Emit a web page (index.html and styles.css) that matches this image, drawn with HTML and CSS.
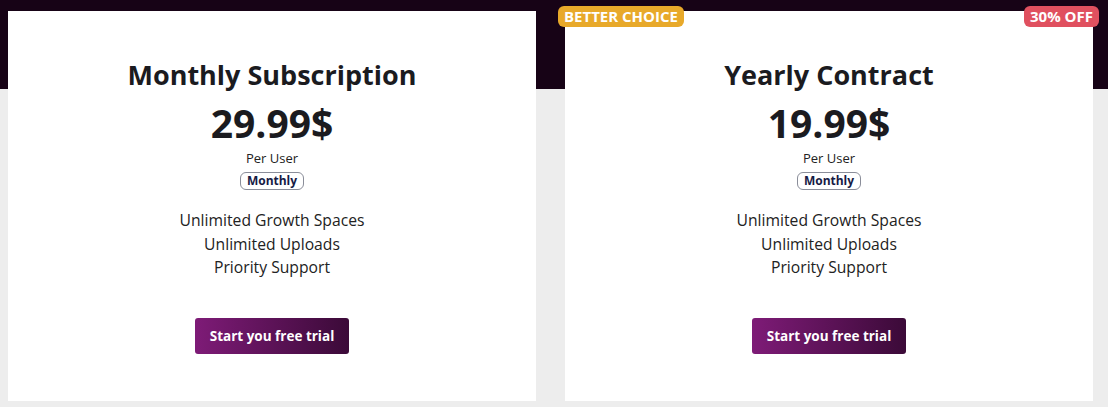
FILE: index.html
```html
<!DOCTYPE html>
<html lang="en">

<head>
  <meta charset="UTF-8">
  <meta name="viewport" content="width=device-width, initial-scale=1.0">
  <title>Pricing</title>
  <link rel="stylesheet" href="styles.css">
</head>

<body>
  <div class="pricing">
    <div class="card">
      <h2>Monthly Subscription</h2>
      <div class="price">29.99$</div>
      <p class="per">Per User</p>
      <span class="period">Monthly</span>
      <ul class="features">
        <li>Unlimited Growth Spaces</li>
        <li>Unlimited Uploads</li>
        <li>Priority Support</li>
      </ul>
      <button>Start you free trial</button>
    </div>

    <div class="card">
      <span class="badge badge-choice">BETTER CHOICE</span>
      <span class="badge badge-off">30% OFF</span>
      <h2>Yearly Contract</h2>
      <div class="price">19.99$</div>
      <p class="per">Per User</p>
      <span class="period">Monthly</span>
      <ul class="features">
        <li>Unlimited Growth Spaces</li>
        <li>Unlimited Uploads</li>
        <li>Priority Support</li>
      </ul>
      <button>Start you free trial</button>
    </div>
  </div>
</body>

</html>
```

FILE: styles.css
```css
body {
  margin: 0;
  font-family: "Open Sans", Arial, sans-serif;
  background: linear-gradient(to bottom, #170316 0, #170316 89px, #ededed 89px);
  height: 407px;
  overflow: hidden;
}

.pricing {
  display: flex;
  gap: 29px;
  padding: 11px 15px 0 8px;
}

.card {
  position: relative;
  flex: 1;
  height: 390px;
  background: #fff;
  display: flex;
  flex-direction: column;
  align-items: center;
  color: #1b1b1f;
}

h2 {
  margin: 46px 0 0;
  font-size: 27px;
  font-weight: 700;
  line-height: 36px;
}

.price {
  font-size: 39px;
  font-weight: 700;
  line-height: 46px;
  margin-top: 7px;
}

.per {
  margin: 3px 0 0;
  font-size: 13px;
  line-height: 18px;
  color: #222;
}

.period {
  margin-top: 5px;
  padding: 0 6px;
  font-size: 12px;
  font-weight: 700;
  line-height: 16px;
  color: #161a45;
  border: 1px solid #8a8d99;
  border-radius: 6px;
}

.features {
  list-style: none;
  margin: 19px 0 0;
  padding: 0;
  text-align: center;
  font-size: 15.7px;
  line-height: 23.5px;
  color: #222;
}

button {
  margin-top: 38px;
  padding: 0 15px;
  height: 36px;
  font-family: inherit;
  font-size: 13.5px;
  font-weight: 700;
  color: #fff;
  background: linear-gradient(to right, #7e1b77, #3b0a38);
  border: none;
  border-radius: 3px;
  cursor: pointer;
}

.badge {
  position: absolute;
  top: -5px;
  padding: 0 6px;
  font-size: 15px;
  font-weight: 700;
  line-height: 21px;
  color: #fff;
  border-radius: 6px;
}

.badge-choice {
  left: -7px;
  background: #e8a92a;
}

.badge-off {
  right: -6px;
  background: #e0505f;
}
```
